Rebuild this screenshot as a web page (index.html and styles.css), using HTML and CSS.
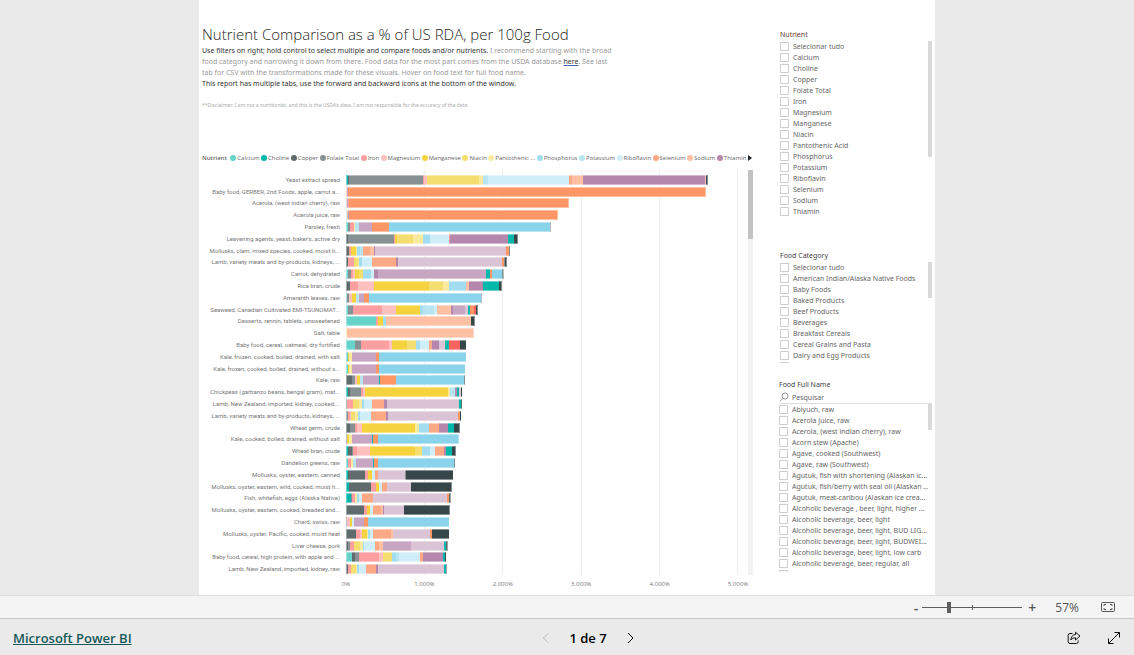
FILE: index.html
```html
<!DOCTYPE html>
<html lang="pt">
<head>
<meta charset="utf-8">
<title>Nutrient Comparison - Microsoft Power BI</title>
<link rel="stylesheet" href="styles.css">
</head>
<body>
<main class="stage">
  <div class="report">
    <section class="main-col">
      <header class="intro">
        <h1>Nutrient Comparison as a % of US RDA, per 100g Food</h1>
        <p><b>Use filters on right; hold control to select multiple and compare foods and/or nutrients.</b> I recommend starting with the broad<br>food category and narrowing it down from there. Food data for the most part comes from the USDA database <a href="#">here</a>. See last<br>tab for CSV with the transformations made for these visuals. Hover on food text for full food name.<br><b>This report has multiple tabs, use the forward and backward icons at the bottom of the window.</b></p>
        <p class="disclaimer">**Disclaimer: I am not a nutritionist, and this is the USDA's data. I am not responsible for the accuracy of the data</p>
      </header>
      <div class="legend" id="legend"><strong>Nutrient</strong></div>
      <div class="chart">
        <div class="plot-area">
          <div class="grid-lines"><i></i><i></i><i></i><i></i><i></i></div>
          <div class="rows" id="rows"></div>
        </div>
        <div class="axis"><span>0%</span><span>1.000%</span><span>2.000%</span><span>3.000%</span><span>4.000%</span><span>5.000%</span></div>
        <div class="scroll chart-scroll"><i></i></div>
      </div>
    </section>
    <aside class="slicers">
      <section class="slicer nutrient">
        <h2>Nutrient</h2>
        <div class="slicer-body"><div class="options" id="nutrients"></div><div class="scroll"><i></i></div></div>
      </section>
      <section class="slicer category">
        <h2>Food Category</h2>
        <div class="slicer-body"><div class="options" id="categories"></div><div class="scroll"><i></i></div></div>
      </section>
      <section class="slicer food">
        <h2>Food Full Name</h2>
        <div class="search">
          <svg viewBox="0 0 10 10" aria-hidden="true"><circle cx="6" cy="4" r="3"/><path d="M4 6.2 1 9.3"/></svg>
          <input type="text" placeholder="Pesquisar" aria-label="Pesquisar">
        </div>
        <div class="slicer-body"><div class="options" id="foods"></div><div class="scroll"><i></i></div></div>
      </section>
    </aside>
  </div>
</main>
<div class="zoom-bar">
  <button type="button" class="step" aria-label="Reduzir">-</button>
  <div class="slider"><input type="range" min="0" max="100" value="26" aria-label="Zoom"></div>
  <button type="button" class="step" aria-label="Ampliar">+</button>
  <span class="zoom-value">57%</span>
  <button type="button" class="fit" aria-label="Ajustar à página"><svg width="14" height="10" viewBox="0 0 14 10"><rect x=".5" y=".5" width="13" height="9" rx="1"/><path d="M3 4V2.500h2M9 2.500h2V4M3 6v1.500h2M9 7.500h2V6"/></svg></button>
</div>
<footer class="nav-bar">
  <a class="brand" href="#">Microsoft Power BI</a>
  <nav class="pager">
    <button type="button" class="off" aria-label="Página anterior"><svg width="7" height="10" viewBox="0 0 7 10"><path d="M6 .5 1.500 5 6 9.500"/></svg></button>
    <span>1 de 7</span>
    <button type="button" aria-label="Próxima página"><svg width="7" height="12" viewBox="0 0 7 12"><path d="M1 1l5 5-5 5"/></svg></button>
  </nav>
  <div class="actions">
    <button type="button" aria-label="Compartilhar"><svg width="14" height="14" viewBox="0 0 14 14"><path d="M5.500 2.500H3a1.800 1.800 0 0 0-1.800 1.800v6.400a1.800 1.800 0 0 0 1.800 1.800h6.400a1.800 1.800 0 0 0 1.800-1.800V9.500"/><path d="M8.500 1.200 13 5.100 8.500 9V6.800C6.500 6.800 5 7.500 3.800 9 4 6 5.500 3.700 8.500 3.500z"/></svg></button>
    <button type="button" aria-label="Tela inteira"><svg width="14" height="14" viewBox="0 0 14 14"><path d="M1.500 12.500 12.500 1.500M7.500 1.500h5v5M1.500 7.500v5h5"/></svg></button>
  </div>
</footer>
<script src="app.js"></script>
</body>
</html>
```
FILE: styles.css
```css
* { box-sizing: border-box; }
body {
  margin: 0;
  height: 100vh;
  display: flex;
  flex-direction: column;
  background: #eaeaea;
  font-family: "Open Sans", "Noto Sans", sans-serif;
  color: #252423;
}
h1, h2, p { margin: 0; font-weight: 400; }
button { border: 0; padding: 0; background: none; color: inherit; font: inherit; display: flex; align-items: center; }
svg { fill: none; stroke: currentColor; }

.stage { flex: 1; min-height: 0; display: flex; justify-content: center; }
.report {
  width: 100%;
  max-width: 736px;
  background: #fff;
  display: grid;
  grid-template-columns: 1fr 155px;
  column-gap: 24px;
  padding: 24px 3px 2px;
}
.main-col { display: flex; flex-direction: column; min-width: 0; min-height: 0; }

.intro { height: 126px; white-space: nowrap; }
.intro h1 { font-size: 15px; line-height: 21px; font-weight: 300; }
.intro p { font-family: "Noto Sans", sans-serif; font-size: 7px; line-height: 11px; color: #999; }
.intro b { font-weight: 400; color: #333; }
.intro a { color: #333; text-decoration: underline; text-decoration-color: #4a62b8; }
.intro .disclaimer { margin-top: 11px; font-size: 5px; color: #aaa; }

.legend { display: flex; justify-content: space-between; align-items: center; height: 16px; padding-right: 1px; font-size: 6px; white-space: nowrap; color: #666; }
.legend strong { font-weight: 600; padding-right: 2px; }
.legend span { display: flex; align-items: center; gap: 1px; }
.legend i { width: 6px; height: 6px; border-radius: 50%; }
.legend .more { border: solid transparent; border-width: 3px 0 3px 4px; border-left-color: #222; }

.chart {
  flex: 1;
  min-height: 0;
  margin-top: 4px;
  display: grid;
  grid-template-columns: 1fr 10px 5px;
  grid-template-rows: 1fr 18px;
}
.plot-area { position: relative; padding-top: 4px; min-height: 0; }
.grid-lines { position: absolute; top: 0; bottom: 0; left: 144px; right: 0; display: grid; grid-template-columns: repeat(5, 1fr); border-left: 1px solid #eee; }
.grid-lines i { border-right: 1px solid #eee; }
.rows { position: relative; height: 100%; display: flex; flex-direction: column; }
.row { flex: 1; min-height: 0; display: grid; grid-template-columns: 138px 1fr; column-gap: 6px; align-items: center; }
.row span { font-family: Roboto, sans-serif; font-size: 6px; line-height: 8px; text-align: right; white-space: nowrap; color: #777; }
.bar { position: relative; display: flex; height: 10px; }
.bar::after { content: ""; position: absolute; inset: 0; box-shadow: inset 0 0 0 1px rgba(255, 255, 255, .4); }
.axis { grid-row: 2; margin-left: 144px; display: flex; justify-content: space-between; align-items: center; font-size: 6px; color: #777; }
.axis span { width: 0; display: flex; justify-content: center; }

.scroll { background: #f3f3f3; }
.scroll i { display: block; background: #d9d9d9; }
.chart-scroll { grid-column: 3; grid-row: 1; }
.chart-scroll i { height: 69px; background: #c2c2c2; }

.slicers { display: flex; flex-direction: column; min-height: 0; padding-top: 5px; font-family: "Noto Sans", sans-serif; }
.slicer { padding-left: 3px; }
.slicer h2 { font-size: 7px; line-height: 12px; color: #444; }
.slicer.nutrient h2 { color: #6b3a30; }
.slicer-body { display: grid; grid-template-columns: 1fr 4px; overflow: hidden; }
.slicer-body .scroll { background: none; }
.options { min-width: 0; overflow: hidden; }
.options label { display: flex; align-items: center; gap: 4px; height: 11px; font-size: 7px; line-height: 11px; white-space: nowrap; color: #666; }
.options input { appearance: none; flex: none; width: 9px; height: 9px; margin: 0; border: 1px solid #d0ced0; background: #fff; }
.nutrient { height: 221px; }
.nutrient .slicer-body { height: 176px; }
.nutrient .scroll i { height: 116px; }
.category { height: 129px; }
.category .slicer-body { height: 101px; }
.category .scroll i { height: 36px; }
.food { padding-left: 2px; }
.food .slicer-body { height: 168px; }
.food .scroll i { height: 26px; }
.search { display: flex; align-items: center; gap: 3px; height: 13px; border-bottom: 1px solid #ddd; color: #777; }
.search svg { width: 10px; height: 10px; stroke-width: .8; }
.search input { flex: 1; min-width: 0; border: 0; padding: 0; font: inherit; font-size: 7px; background: none; }
.search input::placeholder { color: #666; opacity: 1; }

.zoom-bar {
  height: 24px;
  display: flex;
  align-items: center;
  justify-content: flex-end;
  padding-right: 19px;
  background: #f4f4f4;
  border-top: 1px solid #dedede;
  border-bottom: 1px solid #c6c6c6;
  color: #555;
  font-size: 14px;
}
.step { font-weight: 600; }
.slider { position: relative; width: 100px; height: 11px; margin: 0 6px 0 4px; display: flex; }
.slider::before { content: ""; position: absolute; left: 50px; top: 3px; width: 1px; height: 5px; background: #605e5c; }
.slider input { appearance: none; width: 100%; margin: 0; background: linear-gradient(#605e5c, #605e5c) center / 100% 1px no-repeat; }
.slider input::-webkit-slider-thumb { appearance: none; width: 4px; height: 11px; background: #605e5c; }
.zoom-value { margin: 0 22px 0 19px; font-size: 12px; }

.nav-bar { height: 36px; display: grid; grid-template-columns: 1fr auto 1fr; align-items: center; padding: 2px 13px 0; font-size: 13px; }
.brand { font-weight: 600; color: #17595a; }
.pager { display: flex; align-items: center; gap: 20px; padding-left: 42px; font-weight: 600; color: #000; }
.pager .off { color: #b5b5b5; }
.actions { display: flex; justify-content: flex-end; gap: 26px; color: #111; }
```
FILE: app.js
```js
const colors = {
  a: '#67d4cc', b: '#01b8aa', c: '#5f6b6d', d: '#879092', e: '#fd9ea0', f: '#febfbf',
  g: '#f5d33f', h: '#f5de70', i: '#fae99f', j: '#a1ddef', k: '#b8e4f2', l: '#d0eef8',
  m: '#fea985', n: '#febfa3', o: '#b687ac', p: '#c8a5c2', q: '#dac3d5', s: '#fe9666',
  t: '#8ad4eb', u: '#374649', v: '#fd625e'
};
const axisMax = 1174;

const legend = [
  ['Calcium', 'a'], ['Choline', 'b'], ['Copper', 'c'], ['Folate Total', 'd'], ['Iron', 'e'],
  ['Magnesium', 'f'], ['Manganese', 'g'], ['Niacin', 'h'], ['Pantothenic ...', 'i'],
  ['Phosphorus', 'j'], ['Potassium', 'k'], ['Riboflavin', 'l'], ['Selenium', 'm'],
  ['Sodium', 'n'], ['Thiamin', 'o']
];

const foods = [
  ['Yeast extract spread', 'b5 c3 d223 e4 f9 h153 i12 k15 l243 m9 n34 o365 f3 u7'],
  ['Baby food, GERBER, 2nd Foods, apple, carrot a...', 'n2 k2 p2 s1072'],
  ['Acerola, (west indian cherry), raw', 'n3 p3 e3 s660'],
  ['Acerola juice, raw', 'k3 n3 p3 s627'],
  ['Parsley, fresh', 'a5 d8 e10 i5 k10 p39 b2 s51 t480 d5'],
  ["Leavening agents, yeast, baker's, active dry", 'c7 d137 e4 g4 h48 i32 j20 l58 e3 o172 b18 u13'],
  ['Mollusks, clam, mixed species, cooked, moist h...', 'c10 e5 g15 i4 j8 k9 m22 n10 o4 q391 s9 u5'],
  ['Lamb, variety meats and by-products, kidneys, ...', 'c7 e17 h11 i4 j8 l30 m72 o7 q312 s4 d3 u6'],
  ['Carrot, dehydrated', 'a5 d10 e6 f5 g14 h11 j23 l11 o11 p323 b13 s5 t30 d5'],
  ['Rice bran, crude', 'c12 e25 f48 g165 h42 i17 j50 n9 o43 b48 u9'],
  ['Amaranth leaves, raw', 'a4 d6 f8 g11 k9 p15 s17 t333 d5'],
  ['Seaweed, Canadian Cultivated EMI-TSUNOMAT...', 'a5 d17 e87 f42 g71 j9 k34 l7 n42 o7 p37 q9 b4 s14 v6 u4'],
  ['Desserts, rennin, tablets, unsweetened', 'a89 e8 g13 j10 n256 u10'],
  ['Salt, table', 'i2 n380'],
  ['Baby food, cereal, oatmeal, dry fortified', 'a28 d18 e84 f7 g45 h27 j14 l27 m9 o21 q18 b11 v32 u20'],
  ['Kale, frozen, cooked, boiled, drained, with salt', 'a5 g5 i8 p72 s10 t261'],
  ['Kale, frozen, cooked, boiled, drained, without s...', 'a5 g5 i7 p72 s9 t260'],
  ['Kale, raw', 'c19 d9 f6 g8 k8 p50 b3 s46 t206 d3'],
  ['Chickpeas (garbanzo beans, bengal gram), mat...', 'b6 c7 d33 e6 f6 g249 i5 k14 o6 b8 q4 u5'],
  ['Lamb, New Zealand, imported, kidney, cooked,...', 'd4 e18 h16 i10 j7 l24 m35 o8 q218 b4 c5'],
  ['Lamb, variety meats and by-products, kidneys, ...', 'd5 e8 f3 h12 i9 j6 l33 m43 o8 q208 s6 u5'],
  ['Wheat germ, crude', 'c12 d14 e8 f14 g160 i12 j30 m28 o29 b16 u19'],
  ['Kale, cooked, boiled, drained, without salt', 'd4 g6 i7 p62 b3 s15 t242'],
  ['Wheat bran, crude', 'b6 c11 d4 e13 f38 g134 h22 j25 l15 m27 o6 b17 u12'],
  ['Dandelion greens, raw', 'a6 e8 i6 k10 p50 b3 s14 t228 d3'],
  ['Mollusks, oyster, eastern, canned', 'b5 c52 e9 g11 l9 m10 q80 d4 u142'],
  ['Mollusks, oyster, eastern, wild, cooked, moist h...', 'b8 c68 e13 g9 l11 m13 q72 u123'],
  ['Fish, whitefish, eggs (Alaska Native)', 'b14 d3 e9 i8 j5 l9 m34 q222 s6 c5'],
  ['Mollusks, oyster, eastern, cooked, breaded and...', 'c53 e11 g9 l9 m23 n5 o3 q62 u137'],
  ['Chard, swiss, raw', 'd4 f8 g6 l7 p29 s13 t243'],
  ['Mollusks, oyster, Pacific, cooked, moist heat', 'c31 e12 f4 g15 i4 j6 l10 m52 n6 q113 s6 u51'],
  ['Liver cheese, pork', 'c5 d6 e14 h16 i9 j5 l31 m12 n14 p84 q97 b8 c5'],
  ['Baby food, cereal, high protein, with apple and ...', 'a18 c10 d12 e60 f11 h28 j12 k9 l61 m10 o60 b6 u4'],
  ['Lamb, New Zealand, imported, kidney, raw', 'c5 e9 h16 i4 j4 l21 m30 o8 q198 b4 c3']
];

const slicers = {
  nutrients: ['Selecionar tudo', 'Calcium', 'Choline', 'Copper', 'Folate Total', 'Iron', 'Magnesium',
    'Manganese', 'Niacin', 'Pantothenic Acid', 'Phosphorus', 'Potassium', 'Riboflavin', 'Selenium',
    'Sodium', 'Thiamin'],
  categories: ['Selecionar tudo', 'American Indian/Alaska Native Foods', 'Baby Foods', 'Baked Products',
    'Beef Products', 'Beverages', 'Breakfast Cereals', 'Cereal Grains and Pasta',
    'Dairy and Egg Products', 'Fast Foods'],
  foods: ['Abiyuch, raw', 'Acerola juice, raw', 'Acerola, (west indian cherry), raw',
    'Acorn stew (Apache)', 'Agave, cooked (Southwest)', 'Agave, raw (Southwest)',
    'Agutuk, fish with shortening (Alaskan ic...', 'Agutuk, fish/berry with seal oil (Alaskan ...',
    'Agutuk, meat-caribou (Alaskan ice crea...', 'Alcoholic beverage , beer, light, higher ...',
    'Alcoholic beverage, beer, light', 'Alcoholic beverage, beer, light, BUD LIG...',
    'Alcoholic beverage, beer, light, BUDWEI...', 'Alcoholic beverage, beer, light, low carb',
    'Alcoholic beverage, beer, regular, all', 'Alcoholic beverage, beer, regular, BUD...']
};

const legendBox = document.getElementById('legend');
legendBox.insertAdjacentHTML('beforeend', legend.map(([name, key]) =>
  `<span><i style="background:${colors[key]}"></i>${name}</span>`).join('') + '<b class="more"></b>');

document.getElementById('rows').innerHTML = foods.map(([name, data]) => {
  const parts = data.split(' ').map(p => [colors[p[0]], Number(p.slice(1))]);
  const total = parts.reduce((sum, p) => sum + p[1], 0);
  const segments = parts.map(([color, size]) => `<i style="background:${color};width:${size / total * 100}%"></i>`).join('');
  return `<div class="row"><span>${name}</span><div class="bar" style="width:${total / axisMax * 100}%">${segments}</div></div>`;
}).join('');

for (const [id, items] of Object.entries(slicers)) {
  document.getElementById(id).innerHTML = items.map(text =>
    `<label><input type="checkbox">${text}</label>`).join('');
}
```
